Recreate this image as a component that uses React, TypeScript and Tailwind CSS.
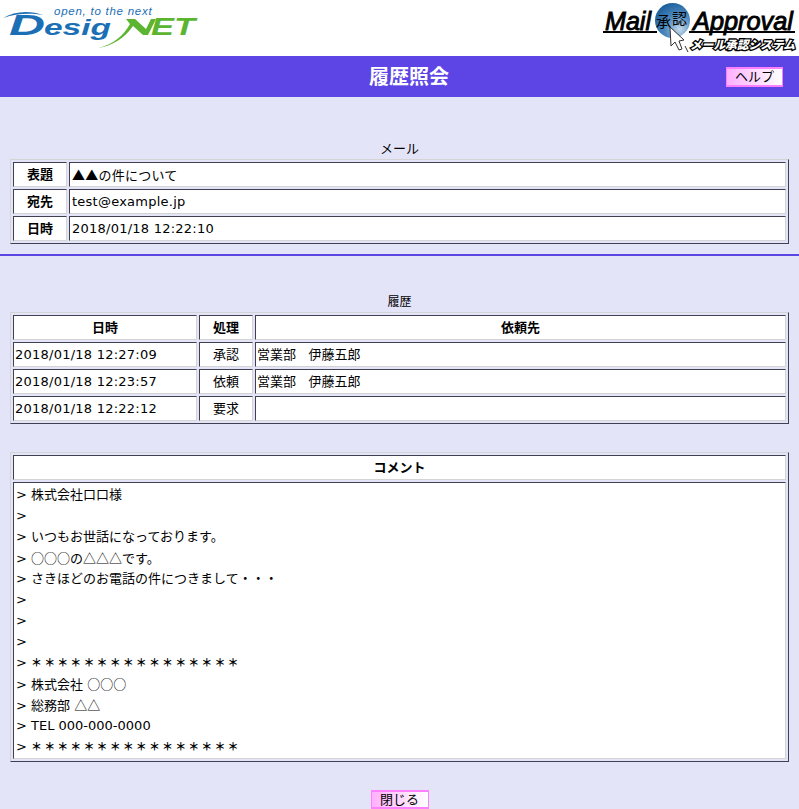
const jp = "font-['DejaVu_Sans','Noto_Sans_CJK_JP',sans-serif]"

function DesignetLogo() {
  return (
    <svg width="200" height="56" viewBox="0 0 200 56">
      <text x="54" y="15" fontFamily="Liberation Sans" fontStyle="italic" fontSize="11.5" letterSpacing="0.75" fill="#1a6fb5">open, to the next</text>
      <path d="M3 18 C14 11 30 10 43 15 C31 13 17 13 3 18 Z" fill="#1a6fb5" />
      <text x="9" y="35" fontFamily="Liberation Sans" fontStyle="italic" fontWeight="700" fontSize="29" textLength="36" lengthAdjust="spacingAndGlyphs" fill="#1a6fb5">D</text>
      <text x="44" y="35" fontFamily="Liberation Sans" fontStyle="italic" fontWeight="700" fontSize="22" textLength="67" lengthAdjust="spacingAndGlyphs" fill="#1a6fb5">esig</text>
      <text x="151" y="35" fontFamily="Liberation Sans" fontStyle="italic" fontWeight="700" fontSize="23" textLength="44" lengthAdjust="spacingAndGlyphs" fill="#5cb531">ET</text>
      <path d="M98 48 C113 45 124 35 130 24 L126 19 L135 19 L146 29 L151 19 L156 19 L148 35 L143 35 L133 26 C125 38 112 46 98 48 Z" fill="#5cb531" />
    </svg>
  )
}

function ApprovalLogo() {
  return (
    <svg width="200" height="56" viewBox="0 0 200 56">
      <text x="6" y="30" fontFamily="Liberation Sans" fontStyle="italic" fontSize="25" textLength="46" lengthAdjust="spacingAndGlyphs" fill="#000" stroke="#000" strokeWidth="0.9">Mail</text>
      <text x="94" y="30" fontFamily="Liberation Sans" fontStyle="italic" fontSize="25" textLength="100" lengthAdjust="spacingAndGlyphs" fill="#000" stroke="#000" strokeWidth="0.9">Approval</text>
      <rect x="4" y="31" width="54" height="2" fill="#000" />
      <rect x="90" y="31" width="106" height="2" fill="#000" />
      <defs>
        <radialGradient id="globe" cx="0.7" cy="0.75" r="0.8">
          <stop offset="0" stopColor="#c4d8ea" />
          <stop offset="0.5" stopColor="#4f8bc0" />
          <stop offset="1" stopColor="#1d5f9c" />
        </radialGradient>
      </defs>
      <circle cx="73.5" cy="20.5" r="17.5" fill="url(#globe)" />
      <text x="57" y="27" fontFamily="Noto Sans CJK JP" fontSize="15" fill="#000">承</text>
      <text x="73" y="24" fontFamily="Noto Sans CJK JP" fontSize="15" fill="#000">認</text>
      <path d="M71 27 L72 46 L76 42 L80 50 L83 49 L80 41 L85 40 Z" fill="#fff" stroke="#333" strokeWidth="1" />
      <path d="M86 46 L89 52" stroke="#333" strokeWidth="1" />
      <text x="91" y="49" fontFamily="Noto Sans CJK JP" fontWeight="900" fontStyle="italic" fontSize="11.6" textLength="105" lengthAdjust="spacingAndGlyphs" fill="#fff" stroke="#000" strokeWidth="2.6" paintOrder="stroke">メール承認システム</text>
    </svg>
  )
}

function PinkButton({ label, className }: { label: string; className: string }) {
  return (
    <div className={`flex items-center justify-center border-x border-y-2 border-[#ff80ff] bg-gradient-to-r from-[#ffb0ff] to-white text-[13px] leading-none text-black ${className}`}>
      {label}
    </div>
  )
}

// DejaVu draws these narrower than the full-width glyphs in the picture
function Line({ text }: { text: string }) {
  return (
    <>
      {text.split(/([▲○△]+|＊+)/).map((part, i) => {
        if (part.startsWith("＊")) {
          return <span key={i} className="font-['Noto_Sans_CJK_JP',sans-serif] text-[11px] font-bold tracking-[2.1px]">{part}</span>
        }
        if (/[▲○△]/.test(part)) {
          return <span key={i} className="font-['Noto_Sans_CJK_JP',sans-serif]">{part}</span>
        }
        return part
      })}
    </>
  )
}

const cell = "border border-t-[#404050] border-l-[#404050] border-r-[#d4d4d4] border-b-[#d4d4d4] bg-white p-0 px-[2px] align-middle"

function Panel({ children }: { children: React.ReactNode }) {
  return (
    <div className="mx-[10px] border border-t-[#d4d4d4] border-l-[#d4d4d4] border-r-[#404050] border-b-[#404050]">
      <table className="w-full table-fixed border-separate border-spacing-[2px] text-[13px] leading-[15px] text-black">
        {children}
      </table>
    </div>
  )
}

const mailRows = [
  { label: "表題", value: "▲▲の件について" },
  { label: "宛先", value: "test@example.jp" },
  { label: "日時", value: "2018/01/18 12:22:10" },
]

const historyRows = [
  { date: "2018/01/18 12:27:09", action: "承認", to: "営業部   伊藤五郎" },
  { date: "2018/01/18 12:23:57", action: "依頼", to: "営業部   伊藤五郎" },
  { date: "2018/01/18 12:22:12", action: "要求", to: "" },
]

const commentLines = [
  "> 株式会社口口様",
  ">",
  "> いつもお世話になっております。",
  "> ○○○の△△△です。",
  "> さきほどのお電話の件につきまして・・・",
  ">",
  ">",
  ">",
  "> ＊＊＊＊＊＊＊＊＊＊＊＊＊＊＊＊",
  "> 株式会社 ○○○",
  "> 総務部 △△",
  "> TEL 000-000-0000",
  "> ＊＊＊＊＊＊＊＊＊＊＊＊＊＊＊＊",
]

export default function App() {
  return (
    <div className={`h-[809px] overflow-hidden bg-[#e4e4f9] ${jp}`}>
      <div className="flex h-14 justify-between bg-white">
        <DesignetLogo />
        <ApprovalLogo />
      </div>
      <div className="flex h-[41px] items-center bg-[#5d44e4] pr-4">
        <div className="flex-1 pl-[92px] text-center text-[20px] font-bold text-white">履歴照会</div>
        <PinkButton label="ヘルプ" className="h-[20px] w-[57px]" />
      </div>

      <div className="mt-[44px] text-center text-[13px] leading-[15px] text-black">メール</div>
      <div className="mt-[3px]">
        <Panel>
          <colgroup>
            <col className="w-[54px]" />
            <col />
          </colgroup>
          <tbody>
            {mailRows.map((row) => (
              <tr key={row.label} className="h-[25px]">
                <td className={`${cell} text-center font-bold`}>{row.label}</td>
                <td className={`${cell} tracking-[0.24px]`}><Line text={row.value} /></td>
              </tr>
            ))}
          </tbody>
        </Panel>
      </div>
      <div className="mt-[10px] h-[2px] bg-[#5d44e4]" />

      <div className="mt-[39px] text-center text-[12px] leading-[15px] text-black">履歴</div>
      <div className="mt-[2px]">
        <Panel>
          <colgroup>
            <col className="w-[184px]" />
            <col className="w-[54px]" />
            <col />
          </colgroup>
          <thead>
            <tr className="h-[25px]">
              <th className={cell}>日時</th>
              <th className={cell}>処理</th>
              <th className={cell}>依頼先</th>
            </tr>
          </thead>
          <tbody>
            {historyRows.map((row) => (
              <tr key={row.date} className="h-[25px]">
                <td className={`${cell} !pl-[1px] tracking-[0.24px]`}>{row.date}</td>
                <td className={`${cell} text-center`}>{row.action}</td>
                <td className={`${cell} !pl-[1px] whitespace-pre`}>{row.to}</td>
              </tr>
            ))}
          </tbody>
        </Panel>
      </div>

      <div className="mt-[28px]">
        <Panel>
          <tbody>
            <tr className="h-[25px]">
              <th className={cell}>コメント</th>
            </tr>
            <tr>
              <td className={`${cell} py-[1px] leading-[21px]`}>
                {commentLines.map((line, i) => (
                  <div key={i} className="h-[21px]"><Line text={line} /></div>
                ))}
              </td>
            </tr>
          </tbody>
        </Panel>
      </div>

      <div className="mt-[28px] flex justify-center">
        <PinkButton label="閉じる" className="h-[19px] w-[58px]" />
      </div>
    </div>
  )
}
